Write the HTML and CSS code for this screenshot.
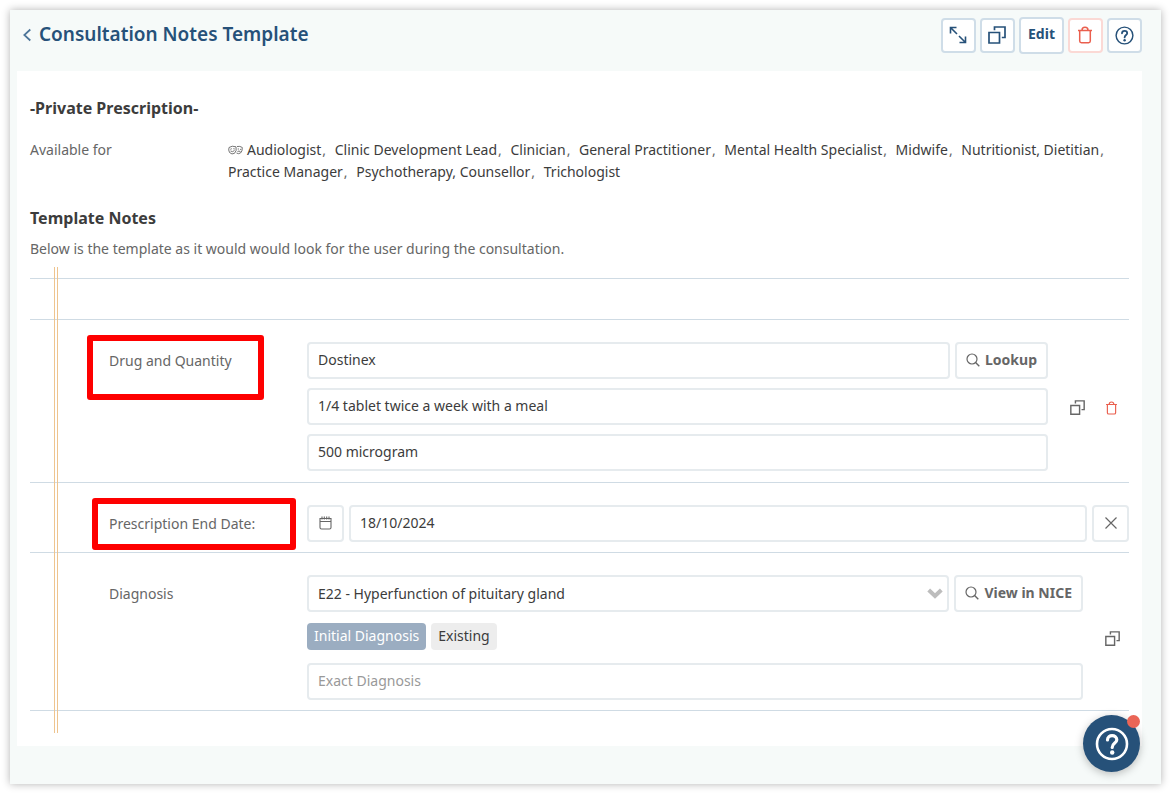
FILE: index.html
```html
<!DOCTYPE html>
<html lang="en">
<head>
<meta charset="utf-8">
<title>Consultation Notes Template</title>
<link rel="stylesheet" href="styles.css">
</head>
<body>
<svg class="sprite" aria-hidden="true">
  <symbol id="i-copy" viewBox="0 0 18 18"><path d="M1 6.500h10.500V17H1zM6.500 4.200V1H17v10.500h-3.200" fill="none" stroke="currentColor" stroke-width="1.700"/></symbol>
  <symbol id="i-trash" viewBox="0 0 16 18"><path d="M1 4.500h14M5 4.300C5 .300 11 .300 11 4.300M2.700 4.500V15q0 1.700 1.700 1.700h7.200q1.700 0 1.700-1.700V4.500" fill="none" stroke="currentColor" stroke-width="1.500"/></symbol>
  <symbol id="i-search" viewBox="0 0 14 14"><circle cx="6" cy="6" r="5" fill="none" stroke="currentColor" stroke-width="1.200"/><path d="M9.600 9.600L13.300 13.300" stroke="currentColor" stroke-width="1.400"/></symbol>
  <symbol id="i-help" viewBox="0 0 34 34"><circle cx="17" cy="17" r="15" fill="none" stroke="currentColor" stroke-width="2.600"/><path d="M12.500 13C12.500 7 21.800 7.200 21.800 12.800C21.800 16.200 17.200 16 17.200 20.500" fill="none" stroke="currentColor" stroke-width="3.200" stroke-linecap="round"/><circle cx="17.200" cy="25.500" r="2.200" fill="currentColor"/></symbol>
</svg>
<div class="shell">
  <header class="topbar">
    <a class="back" href="#" aria-label="Back"><svg width="8" height="14" viewBox="0 0 8 14"><path d="M7.300 1.500L1.300 7l6 5.500" fill="none" stroke="currentColor" stroke-width="1.700"/></svg></a>
    <h1 class="title">Consultation Notes Template</h1>
    <div class="tools">
      <button class="tool" type="button" aria-label="Expand"><svg width="18" height="18" viewBox="0 0 18 18"><path d="M1.500 7.500v-6h6M1.500 1.500L8 8M10 10l6.500 6.500M16.500 10.500v6h-6" fill="none" stroke="currentColor" stroke-width="1.600"/></svg></button>
      <button class="tool" type="button" aria-label="Duplicate"><svg width="18" height="18"><use href="#i-copy"/></svg></button>
      <button class="tool tool-text" type="button">Edit</button>
      <button class="tool tool-danger" type="button" aria-label="Delete"><svg width="16" height="18"><use href="#i-trash"/></svg></button>
      <button class="tool" type="button" aria-label="Help"><svg width="19" height="19" viewBox="0 0 34 34"><use href="#i-help"/></svg></button>
    </div>
  </header>
  <main class="card">
    <h2 class="heading">-Private Prescription-</h2>
    <div class="available">
      <span>Available for</span>
      <p class="roles"><svg class="masks" width="15" height="10" viewBox="0 0 15 10"><path d="M1 2.500Q4 .300 8 1.800Q9 6 6.500 8.300Q4 10 1.500 7.500Q.200 5 1 2.500zM2.300 4.300l1.500-.600M5.300 3.700l1.500.3M2.500 6Q4.500 7.500 6.500 5.500M9 1.500Q12 .800 14.300 2.500Q14.500 6.500 12.500 8Q10.500 9.300 8.500 8M9.700 4h1.300M12 4.300l1.200.2M9.500 6.500Q11 5.500 12.500 6.700" fill="none" stroke="currentColor" stroke-width=".9"/></svg>Audiologist<i>,</i> Clinic Development Lead<i>,</i> Clinician<i>,</i> General Practitioner<i>,</i> Mental Health Specialist<i>,</i> Midwife<i>,</i> Nutritionist, Dietitian<i>,</i> Practice Manager<i>,</i> Psychotherapy, Counsellor<i>,</i> Trichologist</p>
    </div>
    <h2 class="heading">Template Notes</h2>
    <p class="intro">Below is the template as it would would look for the user during the consultation.</p>
    <form class="notes">
      <div class="row row-blank"></div>
      <div class="row row-drug">
        <label class="label marked mark-drug" for="drug">Drug and Quantity</label>
        <div class="fields">
          <div class="line"><input class="box" id="drug" type="text" value="Dostinex"><button class="box btn" type="button"><svg width="14" height="14"><use href="#i-search"/></svg>Lookup</button></div>
          <input class="box" type="text" aria-label="Dosage" value="1/4 tablet twice a week with a meal">
          <input class="box" type="text" aria-label="Quantity" value="500 microgram">
        </div>
        <div class="actions">
          <button class="plain" type="button" aria-label="Duplicate"><svg width="15" height="15"><use href="#i-copy"/></svg></button>
          <button class="plain danger" type="button" aria-label="Delete"><svg width="13" height="14"><use href="#i-trash"/></svg></button>
        </div>
      </div>
      <div class="row">
        <label class="label marked mark-date" for="end">Prescription End Date:</label>
        <div class="fields">
          <div class="line"><button class="box btn square" type="button" aria-label="Open calendar"><svg width="13" height="14" viewBox="0 0 13 14"><path d="M1 2.500h11v9q0 1.500-1.500 1.500h-8Q1 13 1 11.500zM1 5.500h11M3 .500v3M5.300.500v3M7.700.500v3M10 .500v3" fill="none" stroke="currentColor" stroke-width="1.100"/></svg></button><input class="box" id="end" type="text" value="18/10/2024"><button class="box btn square" type="button" aria-label="Clear date"><svg width="12" height="12" viewBox="0 0 12 12"><path d="M.500.500l11 11M11.500.500L.500 11.500" stroke="currentColor" stroke-width="1.200"/></svg></button></div>
        </div>
      </div>
      <div class="row">
        <label class="label" for="diag">Diagnosis</label>
        <div class="fields fields-diag">
          <div class="line"><div class="pick"><select class="box" id="diag"><option>E22 - Hyperfunction of pituitary gland</option></select><svg class="chev" width="16" height="11" viewBox="0 0 16 11"><path d="M1.700 2L8 8l6.300-6" fill="none" stroke="currentColor" stroke-width="4"/></svg></div><button class="box btn" type="button"><svg width="14" height="14"><use href="#i-search"/></svg>View in NICE</button></div>
          <div class="tags"><button class="tag tag-on" type="button">Initial Diagnosis</button><button class="tag" type="button">Existing</button></div>
          <input class="box" type="text" aria-label="Exact Diagnosis" placeholder="Exact Diagnosis">
        </div>
        <div class="actions actions-one"><button class="plain" type="button" aria-label="Duplicate"><svg width="15" height="15"><use href="#i-copy"/></svg></button></div>
      </div>
      <div class="row row-end"></div>
    </form>
  </main>
  <button class="fab" type="button" aria-label="Support"><svg width="34" height="34"><use href="#i-help"/></svg></button>
</div>
</body>
</html>
```
FILE: styles.css
```css
*, *::before, *::after { box-sizing: border-box; }
body {
  margin: 0;
  padding: 10px;
  background: #fff;
  color: #666;
  font: 14px/22px "Noto Sans", sans-serif;
}
h1, h2, p { margin: 0; }
button, input, select { font: inherit; color: inherit; margin: 0; }
svg { display: block; flex: none; }
.sprite { position: absolute; width: 0; height: 0; }
.shell {
  position: relative;
  min-height: calc(100vh - 20px);
  padding: 7px 19px 38px 7px;
  background: #f6faf9;
  box-shadow: 0 0 8px rgba(0, 0, 0, .3);
}
.topbar { display: flex; align-items: flex-start; height: 54px; padding-left: 6px; color: #265179; }
.back { color: #4c7599; padding: 11px 8px 0 0; }
.title { font-size: 19px; line-height: 34px; font-weight: 600; }
.tools { display: flex; align-items: center; gap: 4px; margin-left: auto; }
.tool {
  display: flex;
  align-items: center;
  justify-content: center;
  width: 35px;
  height: 35px;
  padding: 0 1px 1px 0;
  background: #fff;
  border: 2px solid #cfdde8;
  border-radius: 4px;
}
.tool-text { width: 45px; height: 37px; padding: 0 0 3px; font-weight: 700; }
.tool-danger { color: #ea5f4e; border-color: #fbd9d5; }
.card { padding: 26px 13px 13px; background: #fff; }
.heading { font-size: 16px; line-height: 22px; font-weight: 700; color: #3c3c3c; }
.available { display: grid; grid-template-columns: 198px 1fr; margin: 20px 0 24px; }
.roles { color: #3c3c3c; }
.roles i { font-style: normal; color: #666; margin: 0 5px 0 1px; }
.masks { display: inline-block; margin-right: 4px; color: #666; }
.intro { margin: 9px 0 7px; }
.notes { position: relative; padding-top: 11px; }
.notes::before {
  content: "";
  position: absolute;
  top: 0;
  bottom: 0;
  left: 24px;
  width: 4px;
  border-left: 1px solid #eec48f;
  border-right: 1px solid #eec48f;
}
.row {
  display: grid;
  grid-template-columns: 198px 1fr auto;
  padding: 22px 0 10px 79px;
  border-top: 1px solid #cfdbe4;
}
.row-blank { padding: 20px 0; }
.row-drug { padding-bottom: 11px; }
.row-end { padding: 11px 0; }
.label { position: relative; justify-self: start; align-self: start; padding-top: 8px; }
.marked::after { content: ""; position: absolute; border: 6px solid #fe0000; border-radius: 3px; }
.mark-drug::after { inset: -7px -32px -28px -22px; }
.mark-date::after { inset: -7px -41px -15px -17px; }
.fields { display: flex; flex-direction: column; gap: 9px; min-width: 0; }
.fields-diag { gap: 11px; }
.line { display: flex; gap: 5px; }
.box {
  width: 100%;
  min-width: 0;
  height: 37px;
  padding: 0 9px 2px;
  background: #fff;
  border: 2px solid #e6ebee;
  border-radius: 4px;
  color: #3c3c3c;
}
.box::placeholder { color: #999; opacity: 1; }
.btn {
  display: flex;
  flex: none;
  align-items: center;
  justify-content: center;
  gap: 5px;
  width: auto;
  font-weight: 700;
  color: #666;
}
.square { width: 37px; padding: 0 0 2px; }
.pick { position: relative; flex: 1; min-width: 0; }
.pick .box { appearance: none; display: block; padding-bottom: 0; }
.chev { position: absolute; right: 6px; top: 13px; color: #bdbdbd; pointer-events: none; }
.tags { display: flex; gap: 5px; margin-bottom: 2px; }
.tag { height: 27px; padding: 0 7px 2px; border: 0; border-radius: 4px; background: #ededed; color: #3c3c3c; }
.tag-on { background: #9badc1; color: #fff; }
.actions { display: flex; align-items: center; justify-content: space-between; width: 81px; padding: 2px 11px 0 22px; }
.actions-one { width: 46px; justify-content: flex-end; padding: 2px 9px 0 0; }
.plain { padding: 0; border: 0; background: none; }
.danger { color: #ea5f4e; }
.fab {
  position: absolute;
  right: 21px;
  bottom: 12px;
  display: grid;
  place-items: center;
  width: 57px;
  height: 57px;
  padding: 0;
  border: 0;
  border-radius: 50%;
  background: #265179;
  color: #fff;
  box-shadow: 0 2px 8px rgba(0, 0, 0, .25);
}
.fab::after {
  content: "";
  position: absolute;
  top: 0;
  right: 0;
  width: 13px;
  height: 13px;
  border-radius: 50%;
  background: #ea6556;
}
```
